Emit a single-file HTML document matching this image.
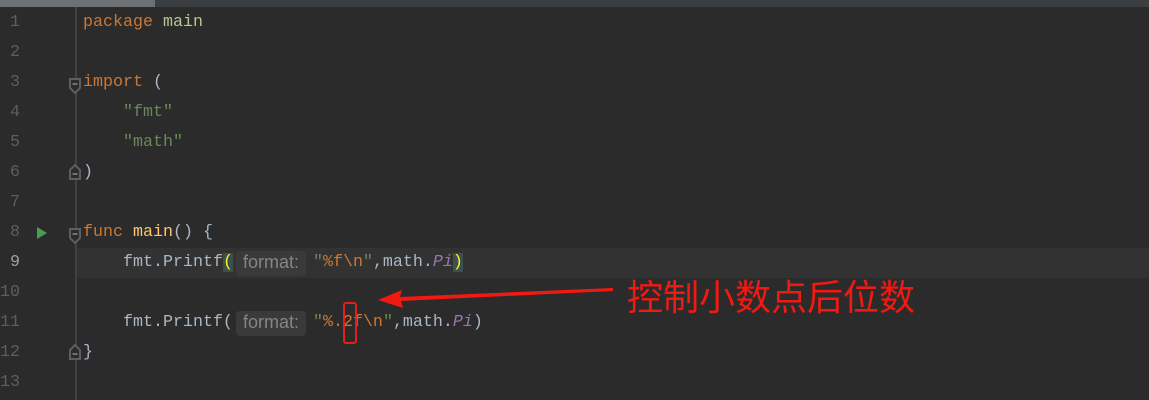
<!DOCTYPE html><html><head><meta charset="utf-8"><style>
body{margin:0;width:1149px;height:400px;background:#2b2b2b;overflow:hidden;position:relative;font-family:"Liberation Mono",monospace;font-size:16.67px}
.top{position:absolute;left:0;top:0;width:1149px;height:7px;background:#3c3f41}
.top i{position:absolute;left:0;top:0;width:155px;height:7px;background:#6e7174}
.gl{position:absolute;left:75px;top:7px;width:2px;height:393px;background:#3f4143}
.cur{position:absolute;left:77px;top:248px;width:1072px;height:30px;background:#323232}
.ln{position:absolute;left:0;width:20px;text-align:right;color:#5c5f61;height:30px;line-height:30px}
.c{position:absolute;left:83px;height:30px;line-height:30px;white-space:pre;color:#a9b7c6}
.k{color:#cc7832}.s{color:#6a8759}.f{color:#ffc66d}.p{color:#9876aa;font-style:italic}
.h{display:inline-block;background:#3a3a3a;color:#858585;font-family:"Liberation Sans",sans-serif;font-size:18px;border-radius:4px;padding:0 7px;height:25px;line-height:23px;margin:3px 7px 0 3px;vertical-align:top}
.bm{background:#3b514d;color:#ffef28}
.fold{position:absolute;left:68px}
</style></head><body>
<div class="top"><i></i></div>
<div class="cur"></div>
<div class="gl"></div>
<div class="ln" style="top:8px">1</div><div class="ln" style="top:38px">2</div><div class="ln" style="top:68px">3</div><div class="ln" style="top:98px">4</div><div class="ln" style="top:128px">5</div><div class="ln" style="top:158px">6</div><div class="ln" style="top:188px">7</div><div class="ln" style="top:218px">8</div><div class="ln" style="top:248px;color:#a4a3a3">9</div><div class="ln" style="top:278px">10</div><div class="ln" style="top:308px">11</div><div class="ln" style="top:338px">12</div><div class="ln" style="top:368px">13</div>
<svg style="position:absolute;left:36px;top:226px" width="12" height="14"><path d="M1 1L11 7L1 13Z" fill="#499c54"/></svg>
<svg class="fold" style="top:77px" width="14" height="18"><path d="M2 2H12V11L7 16L2 11Z" fill="#2b2b2b" stroke="#5c5f61" stroke-width="2"/><path d="M4.5 7H9.5" stroke="#6f7275" stroke-width="2"/></svg>
<svg class="fold" style="top:227px" width="14" height="18"><path d="M2 2H12V11L7 16L2 11Z" fill="#2b2b2b" stroke="#5c5f61" stroke-width="2"/><path d="M4.5 7H9.5" stroke="#6f7275" stroke-width="2"/></svg>
<svg class="fold" style="top:163px" width="14" height="18"><path d="M2 16H12V7L7 2L2 7Z" fill="#2b2b2b" stroke="#5c5f61" stroke-width="2"/><path d="M4.5 11H9.5" stroke="#6f7275" stroke-width="2"/></svg>
<svg class="fold" style="top:343px" width="14" height="18"><path d="M2 16H12V7L7 2L2 7Z" fill="#2b2b2b" stroke="#5c5f61" stroke-width="2"/><path d="M4.5 11H9.5" stroke="#6f7275" stroke-width="2"/></svg>
<div class="c" style="top:8px"><span class="k">package</span> <span style="color:#b5c98a">main</span></div>
<div class="c" style="top:68px"><span class="k">import</span> (</div>
<div class="c" style="top:98px">    <span class="s">"fmt"</span></div>
<div class="c" style="top:128px">    <span class="s">"math"</span></div>
<div class="c" style="top:158px">)</div>
<div class="c" style="top:218px"><span class="k">func</span> <span class="f">main</span>() {</div>
<div class="c" style="top:248px">    fmt.Printf<span class="bm">(</span><span class="h">format:</span><span class="s">"<span class="k">%f\n</span>"</span>,math.<span class="p">Pi</span><span class="bm">)</span></div>
<div class="c" style="top:308px">    fmt.Printf(<span class="h">format:</span><span class="s">"<span class="k">%.2f\n</span>"</span>,math.<span class="p">Pi</span>)</div>
<div class="c" style="top:338px">}</div>
<div style="position:absolute;left:343px;top:302px;width:10px;height:38px;border:2px solid #e0201a;border-radius:3px"></div>
<svg style="position:absolute;left:370px;top:280px" width="250" height="30"><path d="M243 8L30 17L32 10L8 20L33 28L31 21L243 11Z" fill="#f01a12"/></svg>
<div style="position:absolute;left:627px;top:272px;color:#f01a12;font-family:'Noto Sans CJK SC',sans-serif;font-size:36px;line-height:46px">控制小数点后位数</div>
</body></html>
